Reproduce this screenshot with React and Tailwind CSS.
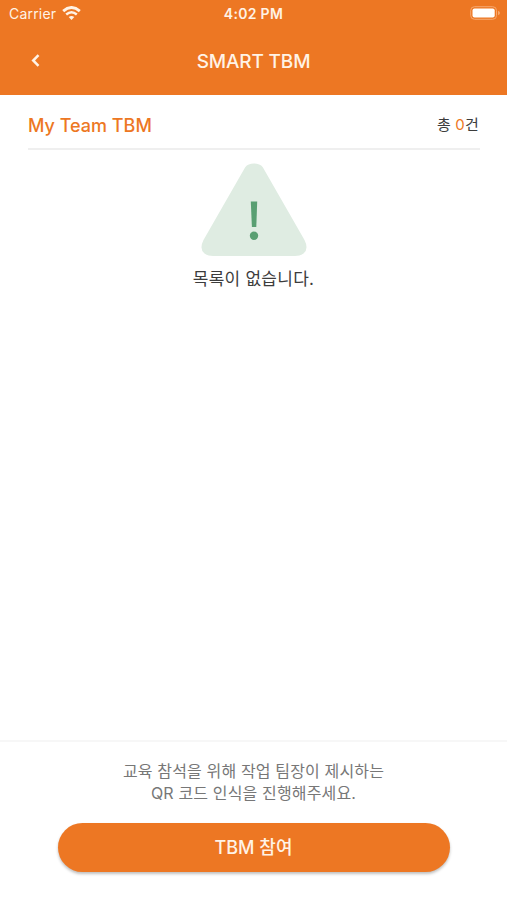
import React from 'react'

const GUIDE_LINES = ['교육 참석을 위해 작업 팀장이 제시하는', 'QR 코드 인식을 진행해주세요.']

export default function App() {
  return (
    <div className="flex h-screen flex-col bg-white font-['Inter','Noto_Sans_CJK_KR',sans-serif] text-[#3c3c3c]">
      <header className="h-[95px] shrink-0 bg-[#ed7723] text-[#fff3e6]">
        <StatusBar />
        <div className="grid h-[66px] grid-cols-[70px_1fr_70px] items-center">
          <button aria-label="Back" className="flex h-full items-center justify-center pb-px">
            <BackIcon />
          </button>
          <h1 className="pt-px text-center text-[19px] leading-6 font-medium tracking-[-0.15px]">SMART TBM</h1>
        </div>
      </header>

      <main className="flex-1 px-7">
        <div className="-mr-px flex h-[55px] items-center justify-between border-b-2 border-[#efefef]">
          <h2 className="pt-2 text-lg font-medium text-[#ed7723]">My Team TBM</h2>
          <p className="pt-[7px] pr-px text-[15px] tracking-[0.2px]">
            총 <span className="text-[#ed7723]">0</span>건
          </p>
        </div>
        <EmptyList />
      </main>

      <footer className="flex h-[160px] shrink-0 flex-col items-center border-t-2 border-[#f7f7f7] pt-[18px]">
        <p className="text-center text-base leading-[22px] tracking-[0.15px] text-[#777]">
          {GUIDE_LINES.map((line) => (
            <span key={line} className="block">{line}</span>
          ))}
        </p>
        <button className="mt-[19px] h-[49px] w-[392px] rounded-full bg-[#ed7723] text-lg font-medium text-[#fff3e6] shadow-[0_2px_3px_rgba(0,0,0,0.25)]">
          TBM 참여
        </button>
      </footer>
    </div>
  )
}

function StatusBar() {
  return (
    <div className="grid h-7 grid-cols-3 items-center pr-[7px] pl-[7px]">
      <div className="flex items-center gap-1.5 pl-0.5 text-sm tracking-[0.2px]">
        <span>Carrier</span>
        <WifiIcon />
      </div>
      <span className="text-center text-sm font-semibold tracking-[0.3px]">4:02 PM</span>
      <div className="flex justify-end">
        <BatteryIcon />
      </div>
    </div>
  )
}

function EmptyList() {
  return (
    <div className="flex flex-col items-center pt-[13px]">
      <svg width="106" height="94" viewBox="0 0 106 94" aria-hidden="true">
        <path
          d="M44.2 4.2Q47 .5 53 .5T61.8 4.2L103.5 77Q108 86 102.5 90.5Q99.500 93 94 93H12Q6.500 93 3.500 90.500Q-2 86 2.500 77Z"
          fill="#dfece2"
        />
        <path d="M49.800 38.500H56.200L55.300 64H50.900Z" fill="#599f72" />
        <circle cx="53" cy="72.700" r="4.200" fill="#599f72" />
      </svg>
      <p className="mt-2.5 text-[17px] leading-6 tracking-[0.25px]">목록이 없습니다.</p>
    </div>
  )
}

function BackIcon() {
  return (
    <svg width="9" height="13" viewBox="0 0 9 13" fill="none" aria-hidden="true">
      <path d="M7.500 1.100L2.200 6.500L7.500 11.900" stroke="currentColor" strokeWidth="2.500" />
    </svg>
  )
}

function WifiIcon() {
  return (
    <svg width="19" height="14" viewBox="0 0 19 14" fill="none" aria-hidden="true" className="-mt-0.5">
      <path d="M1.200 5.100Q9.500-2.100 17.800 5.100" stroke="currentColor" strokeWidth="2.900" />
      <path d="M4.200 8.500Q9.500 4 14.800 8.500" stroke="currentColor" strokeWidth="2.500" />
      <path d="M6.700 11.100Q9.500 8.700 12.300 11.100L9.500 13.900Z" fill="currentColor" />
    </svg>
  )
}

function BatteryIcon() {
  return (
    <svg width="30" height="14" viewBox="0 0 30 14" aria-hidden="true" className="-mt-0.5">
      <rect x=".7" y=".7" width="25.800" height="12.600" rx="3.800" fill="none" stroke="#f6a870" strokeWidth="1" />
      <rect x="2.500" y="2.500" width="22.200" height="9" rx="2" fill="#fff" />
      <path d="M28 4.800Q30 5.500 30 7T28 9.200Z" fill="#f6a870" />
    </svg>
  )
}
